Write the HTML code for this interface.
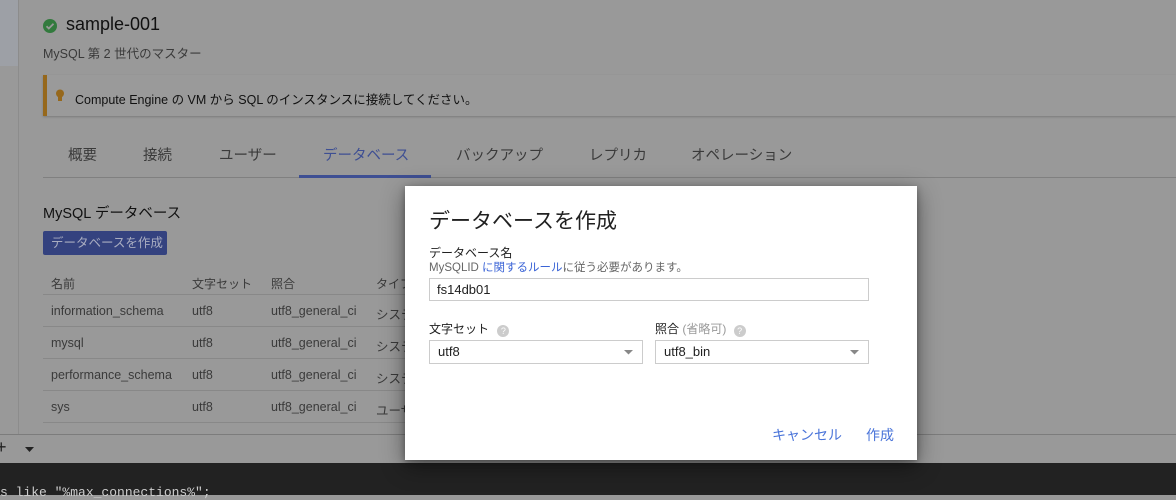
<!DOCTYPE html>
<html><head><meta charset="utf-8"><style>
*{box-sizing:border-box;margin:0;padding:0}
body{width:1176px;height:495px;overflow:hidden;background:#999;font-family:"Liberation Sans","Noto Sans CJK JP",sans-serif;position:relative;color:#1a1a1a}
.a{position:absolute;white-space:nowrap}
.g{color:#3a3a3a}
.hl{position:absolute;height:1px;background:#888}
</style></head><body>
<div class="a" style="left:0;top:0;width:18px;height:66px;background:#9da0a6"></div>
<div class="a" style="left:18px;top:0;width:1px;height:435px;background:#8c8c8c"></div>

<svg class="a" style="left:42px;top:18px" width="16" height="16"><circle cx="8" cy="8" r="7" fill="#327a3d"/><path d="M4.5 8.2l2.3 2.3 4.7-4.7" stroke="#999" stroke-width="1.8" fill="none"/></svg>
<div class="a" style="left:66px;top:14px;font-size:18px;color:#111">sample-001</div>
<div class="a g" style="left:43px;top:43px;font-size:12.5px">MySQL 第 2 世代のマスター</div>

<div class="a" style="left:43px;top:75px;width:1133px;height:41px;background:#9a9a9a;border-left:4px solid #96681c;box-shadow:0 1px 2px rgba(0,0,0,.2)"></div>
<svg class="a" style="left:55px;top:89px" width="10" height="14"><circle cx="5" cy="4.5" r="4" fill="#96681c"/><rect x="3" y="8" width="4" height="4" fill="#96681c"/></svg>
<div class="a" style="left:75px;top:89px;font-size:12.5px;color:#111">Compute Engine の VM から SQL のインスタンスに接続してください。</div>

<div class="a g" style="left:68px;top:144px;font-size:14.5px">概要</div>
<div class="a g" style="left:143px;top:144px;font-size:14.5px">接続</div>
<div class="a g" style="left:219px;top:144px;font-size:14.5px">ユーザー</div>
<div class="a" style="left:323px;top:144px;font-size:14.5px;color:#3e4f93">データベース</div>
<div class="a g" style="left:456px;top:144px;font-size:14.5px">バックアップ</div>
<div class="a g" style="left:589px;top:144px;font-size:14.5px">レプリカ</div>
<div class="a g" style="left:691px;top:144px;font-size:14.5px">オペレーション</div>
<div class="hl" style="left:43px;top:177px;width:1133px;background:#808080"></div>
<div class="a" style="left:299px;top:175px;width:132px;height:3px;background:#3e4f93"></div>

<div class="a" style="left:43px;top:202px;font-size:14.5px;color:#111">MySQL データベース</div>
<div class="a" style="left:43px;top:231px;width:124px;height:24px;background:#34427f;border-radius:2px;color:#a8acc0;font-size:12.5px;line-height:24px;padding-left:8px">データベースを作成</div>

<div class="a g" style="left:51px;top:275px;font-size:12px">名前</div>
<div class="a g" style="left:192px;top:275px;font-size:12px">文字セット</div>
<div class="a g" style="left:271px;top:275px;font-size:12px">照合</div>
<div class="a g" style="left:376px;top:275px;font-size:12px">タイプ</div>
<div class="hl" style="left:43px;top:294px;width:370px"></div>
<div class="a g" style="left:51px;top:304px;font-size:12.5px">information_schema</div><div class="a g" style="left:192px;top:304px;font-size:12.5px">utf8</div><div class="a g" style="left:271px;top:304px;font-size:12.5px">utf8_general_ci</div><div class="a g" style="left:376px;top:304px;font-size:12.5px">システム</div>
<div class="hl" style="left:43px;top:326px;width:370px"></div>
<div class="a g" style="left:51px;top:336px;font-size:12.5px">mysql</div><div class="a g" style="left:192px;top:336px;font-size:12.5px">utf8</div><div class="a g" style="left:271px;top:336px;font-size:12.5px">utf8_general_ci</div><div class="a g" style="left:376px;top:336px;font-size:12.5px">システム</div>
<div class="hl" style="left:43px;top:358px;width:370px"></div>
<div class="a g" style="left:51px;top:368px;font-size:12.5px">performance_schema</div><div class="a g" style="left:192px;top:368px;font-size:12.5px">utf8</div><div class="a g" style="left:271px;top:368px;font-size:12.5px">utf8_general_ci</div><div class="a g" style="left:376px;top:368px;font-size:12.5px">システム</div>
<div class="hl" style="left:43px;top:390px;width:370px"></div>
<div class="a g" style="left:51px;top:400px;font-size:12.5px">sys</div><div class="a g" style="left:192px;top:400px;font-size:12.5px">utf8</div><div class="a g" style="left:271px;top:400px;font-size:12.5px">utf8_general_ci</div><div class="a g" style="left:376px;top:400px;font-size:12.5px">ユーザー</div>
<div class="hl" style="left:43px;top:422px;width:370px"></div>

<div class="hl" style="left:0;top:434px;width:1176px;background:#7c7c7c"></div>
<div class="a" style="left:-4px;top:437px;font-size:18px;color:#222">+</div>
<svg class="a" style="left:25px;top:447px" width="10" height="6"><path d="M0 0h9l-4.5 5z" fill="#222"/></svg>
<div class="a" style="left:0;top:463px;width:1176px;height:32px;background:#222"></div>
<div class="a" style="left:0;top:485px;font-family:'Liberation Mono',monospace;font-size:13px;color:#ccc">s like "%max_connections%";</div>

<div class="a" style="left:405px;top:186px;width:512px;height:274px;background:#fff;box-shadow:0 6px 22px rgba(0,0,0,.45),0 2px 6px rgba(0,0,0,.3)">
 <div class="a" style="left:24px;top:19px;font-size:21px;color:#212121">データベースを作成</div>
 <div class="a" style="left:24px;top:58px;font-size:12px;color:#212121">データベース名</div>
 <div class="a" style="left:24px;top:73px;font-size:11.5px;color:#666">MySQLID <span style="color:#3b64d6">に関するルール</span>に従う必要があります。</div>
 <div class="a" style="left:24px;top:92px;width:440px;height:23px;border:1px solid #ccc;font-size:13px;line-height:21px;padding-left:7px;color:#212121">fs14db01</div>
 <div class="a" style="left:24px;top:134px;font-size:12px;color:#212121">文字セット <span style="display:inline-block;width:12px;height:12px;border-radius:50%;background:#ccc;color:#fff;font-size:9px;text-align:center;line-height:12px;margin-left:5px;vertical-align:-1px">?</span></div>
 <div class="a" style="left:250px;top:134px;font-size:12px;color:#212121">照合 <span style="color:#999">(省略可)</span> <span style="display:inline-block;width:12px;height:12px;border-radius:50%;background:#ccc;color:#fff;font-size:9px;text-align:center;line-height:12px;margin-left:4px;vertical-align:-1px">?</span></div>
 <div class="a" style="left:24px;top:154px;width:214px;height:24px;border:1px solid #ccc;font-size:13px;line-height:22px;padding-left:8px;color:#212121">utf8</div>
 <svg class="a" style="left:219px;top:164px" width="9" height="5"><path d="M0 0h9l-4.5 4.5z" fill="#888"/></svg>
 <div class="a" style="left:250px;top:154px;width:214px;height:24px;border:1px solid #ccc;font-size:13px;line-height:22px;padding-left:8px;color:#212121">utf8_bin</div>
 <svg class="a" style="left:445px;top:164px" width="9" height="5"><path d="M0 0h9l-4.5 4.5z" fill="#888"/></svg>
 <div class="a" style="left:367px;top:239px;font-size:14px;color:#4a74d9">キャンセル</div>
 <div class="a" style="left:461px;top:239px;font-size:14px;color:#4a74d9">作成</div>
</div>
</body></html>
